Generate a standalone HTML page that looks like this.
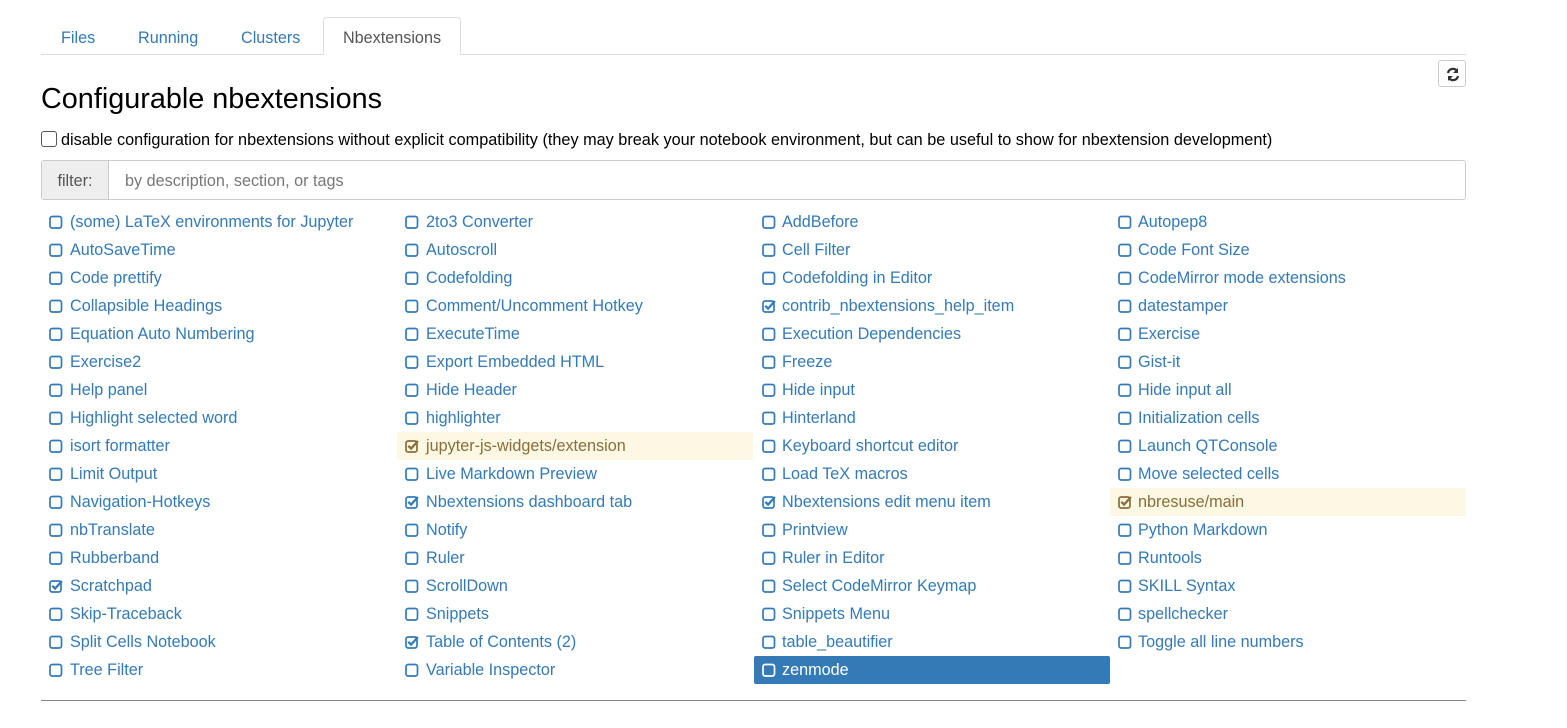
<!DOCTYPE html>
<html><head><meta charset="utf-8"><style>
*{box-sizing:border-box}
body{margin:0;background:#fff;font-family:"Liberation Sans",Arial,sans-serif;width:1567px;height:728px;overflow:hidden;position:relative;color:#000}
.tabs{position:absolute;left:41px;top:17px;width:1425px;height:38px;border-bottom:1px solid #ddd}
.tab{position:absolute;top:0;height:38px;line-height:42px;font-size:16.2px;color:#337ab7}
.tab.act{border:1px solid #ddd;border-bottom-color:#fff;border-radius:4px 4px 0 0;color:#555;background:#fff;height:38px;line-height:40px}
h1{position:absolute;left:41px;top:81px;margin:0;font-size:28.8px;font-weight:normal;line-height:36px}
.refresh{position:absolute;left:1438px;top:60px;width:28px;height:27px;border:1px solid #ccc;border-radius:3px;background:#fff}
.cb{position:absolute;left:41px;top:131px;width:16px;height:16px;border:1px solid #555;border-radius:3px}
.disable{position:absolute;left:61px;top:131px;font-size:16.25px;line-height:19px}
.filter{position:absolute;left:41px;top:160px;width:1425px;height:40px;border:1px solid #ccc;border-radius:3px}
.filter .add{position:absolute;left:0;top:0;width:67px;height:38px;background:#eee;border-right:1px solid #ccc;color:#555;font-size:16.2px;line-height:40px;text-align:center}
.filter .ph{position:absolute;left:83px;top:0;line-height:40px;font-size:16.2px;color:#777}
.col{position:absolute;top:208px;width:356px}
.it{height:28px;line-height:28px;font-size:16.2px;color:#337ab7;padding-left:8px;border-radius:2px;white-space:nowrap;position:relative}
.it svg{position:absolute;left:8px;top:7px}
.it span{position:absolute;left:28px;top:0}
.it.w{background:#fcf8e3;color:#8a6d3b}
.it.s{background:#337ab7;color:#fff}
.hr{position:absolute;left:41px;top:700px;width:1425px;height:1px;background:#888}
</style></head><body>
<div class="tabs">
<div class="tab" style="left:20px">Files</div>
<div class="tab" style="left:97px">Running</div>
<div class="tab" style="left:200px">Clusters</div>
<div class="tab act" style="left:282px;width:138px;text-align:center">Nbextensions</div>
</div>
<div class="refresh"><svg width="28" height="27" viewBox="0 0 28 27"><path d="M9 12a5 5 0 0 1 9-2" stroke="#333" stroke-width="2.2" fill="none"/><path d="M19 7v5h-5z" fill="#333"/><path d="M19 15a5 5 0 0 1-9 2" stroke="#333" stroke-width="2.2" fill="none"/><path d="M9 20v-5h5z" fill="#333"/></svg></div>
<h1>Configurable nbextensions</h1>
<div class="cb"></div>
<div class="disable">disable configuration for nbextensions without explicit compatibility (they may break your notebook environment, but can be useful to show for nbextension development)</div>
<div class="filter"><div class="add">filter:</div><div class="ph">by description, section, or tags</div></div>
<svg width="0" height="0" style="position:absolute"><defs>
<symbol id="u" viewBox="0 0 14 14"><rect x="1" y="1.5" width="11.5" height="11.5" rx="2.2" fill="none" stroke="currentColor" stroke-width="1.7"/></symbol>
<symbol id="c" viewBox="0 0 14 14"><rect x="1" y="2" width="11" height="11" rx="2.2" fill="none" stroke="currentColor" stroke-width="1.7"/><path d="M3.3 6.8l2.8 2.8 6.8-7.6" fill="none" stroke="currentColor" stroke-width="2.3"/></symbol>
</defs></svg>
<div class="col" style="left:41px">
<div class="it"><svg width="14" height="14"><use href="#u"/></svg><span style="left:29px">(some) LaTeX environments for Jupyter</span></div>
<div class="it"><svg width="14" height="14"><use href="#u"/></svg><span style="left:29px">AutoSaveTime</span></div>
<div class="it"><svg width="14" height="14"><use href="#u"/></svg><span style="left:29px">Code prettify</span></div>
<div class="it"><svg width="14" height="14"><use href="#u"/></svg><span style="left:29px">Collapsible Headings</span></div>
<div class="it"><svg width="14" height="14"><use href="#u"/></svg><span style="left:29px">Equation Auto Numbering</span></div>
<div class="it"><svg width="14" height="14"><use href="#u"/></svg><span style="left:29px">Exercise2</span></div>
<div class="it"><svg width="14" height="14"><use href="#u"/></svg><span style="left:29px">Help panel</span></div>
<div class="it"><svg width="14" height="14"><use href="#u"/></svg><span style="left:29px">Highlight selected word</span></div>
<div class="it"><svg width="14" height="14"><use href="#u"/></svg><span style="left:29px">isort formatter</span></div>
<div class="it"><svg width="14" height="14"><use href="#u"/></svg><span style="left:29px">Limit Output</span></div>
<div class="it"><svg width="14" height="14"><use href="#u"/></svg><span style="left:29px">Navigation-Hotkeys</span></div>
<div class="it"><svg width="14" height="14"><use href="#u"/></svg><span style="left:29px">nbTranslate</span></div>
<div class="it"><svg width="14" height="14"><use href="#u"/></svg><span style="left:29px">Rubberband</span></div>
<div class="it"><svg width="14" height="14"><use href="#c"/></svg><span style="left:29px">Scratchpad</span></div>
<div class="it"><svg width="14" height="14"><use href="#u"/></svg><span style="left:29px">Skip-Traceback</span></div>
<div class="it"><svg width="14" height="14"><use href="#u"/></svg><span style="left:29px">Split Cells Notebook</span></div>
<div class="it"><svg width="14" height="14"><use href="#u"/></svg><span style="left:29px">Tree Filter</span></div>
</div>
<div class="col" style="left:397px">
<div class="it"><svg width="14" height="14"><use href="#u"/></svg><span style="left:29px">2to3 Converter</span></div>
<div class="it"><svg width="14" height="14"><use href="#u"/></svg><span style="left:29px">Autoscroll</span></div>
<div class="it"><svg width="14" height="14"><use href="#u"/></svg><span style="left:29px">Codefolding</span></div>
<div class="it"><svg width="14" height="14"><use href="#u"/></svg><span style="left:29px">Comment/Uncomment Hotkey</span></div>
<div class="it"><svg width="14" height="14"><use href="#u"/></svg><span style="left:29px">ExecuteTime</span></div>
<div class="it"><svg width="14" height="14"><use href="#u"/></svg><span style="left:29px">Export Embedded HTML</span></div>
<div class="it"><svg width="14" height="14"><use href="#u"/></svg><span style="left:29px">Hide Header</span></div>
<div class="it"><svg width="14" height="14"><use href="#u"/></svg><span style="left:29px">highlighter</span></div>
<div class="it w"><svg width="14" height="14"><use href="#c"/></svg><span style="left:29px">jupyter-js-widgets/extension</span></div>
<div class="it"><svg width="14" height="14"><use href="#u"/></svg><span style="left:29px">Live Markdown Preview</span></div>
<div class="it"><svg width="14" height="14"><use href="#c"/></svg><span style="left:29px">Nbextensions dashboard tab</span></div>
<div class="it"><svg width="14" height="14"><use href="#u"/></svg><span style="left:29px">Notify</span></div>
<div class="it"><svg width="14" height="14"><use href="#u"/></svg><span style="left:29px">Ruler</span></div>
<div class="it"><svg width="14" height="14"><use href="#u"/></svg><span style="left:29px">ScrollDown</span></div>
<div class="it"><svg width="14" height="14"><use href="#u"/></svg><span style="left:29px">Snippets</span></div>
<div class="it"><svg width="14" height="14"><use href="#c"/></svg><span style="left:29px">Table of Contents (2)</span></div>
<div class="it"><svg width="14" height="14"><use href="#u"/></svg><span style="left:29px">Variable Inspector</span></div>
</div>
<div class="col" style="left:754px">
<div class="it"><svg width="14" height="14"><use href="#u"/></svg><span>AddBefore</span></div>
<div class="it"><svg width="14" height="14"><use href="#u"/></svg><span>Cell Filter</span></div>
<div class="it"><svg width="14" height="14"><use href="#u"/></svg><span>Codefolding in Editor</span></div>
<div class="it"><svg width="14" height="14"><use href="#c"/></svg><span>contrib_nbextensions_help_item</span></div>
<div class="it"><svg width="14" height="14"><use href="#u"/></svg><span>Execution Dependencies</span></div>
<div class="it"><svg width="14" height="14"><use href="#u"/></svg><span>Freeze</span></div>
<div class="it"><svg width="14" height="14"><use href="#u"/></svg><span>Hide input</span></div>
<div class="it"><svg width="14" height="14"><use href="#u"/></svg><span>Hinterland</span></div>
<div class="it"><svg width="14" height="14"><use href="#u"/></svg><span>Keyboard shortcut editor</span></div>
<div class="it"><svg width="14" height="14"><use href="#u"/></svg><span>Load TeX macros</span></div>
<div class="it"><svg width="14" height="14"><use href="#c"/></svg><span>Nbextensions edit menu item</span></div>
<div class="it"><svg width="14" height="14"><use href="#u"/></svg><span>Printview</span></div>
<div class="it"><svg width="14" height="14"><use href="#u"/></svg><span>Ruler in Editor</span></div>
<div class="it"><svg width="14" height="14"><use href="#u"/></svg><span>Select CodeMirror Keymap</span></div>
<div class="it"><svg width="14" height="14"><use href="#u"/></svg><span>Snippets Menu</span></div>
<div class="it"><svg width="14" height="14"><use href="#u"/></svg><span>table_beautifier</span></div>
<div class="it s"><svg width="14" height="14"><use href="#u"/></svg><span>zenmode</span></div>
</div>
<div class="col" style="left:1110px">
<div class="it"><svg width="14" height="14"><use href="#u"/></svg><span>Autopep8</span></div>
<div class="it"><svg width="14" height="14"><use href="#u"/></svg><span>Code Font Size</span></div>
<div class="it"><svg width="14" height="14"><use href="#u"/></svg><span>CodeMirror mode extensions</span></div>
<div class="it"><svg width="14" height="14"><use href="#u"/></svg><span>datestamper</span></div>
<div class="it"><svg width="14" height="14"><use href="#u"/></svg><span>Exercise</span></div>
<div class="it"><svg width="14" height="14"><use href="#u"/></svg><span>Gist-it</span></div>
<div class="it"><svg width="14" height="14"><use href="#u"/></svg><span>Hide input all</span></div>
<div class="it"><svg width="14" height="14"><use href="#u"/></svg><span>Initialization cells</span></div>
<div class="it"><svg width="14" height="14"><use href="#u"/></svg><span>Launch QTConsole</span></div>
<div class="it"><svg width="14" height="14"><use href="#u"/></svg><span>Move selected cells</span></div>
<div class="it w"><svg width="14" height="14"><use href="#c"/></svg><span>nbresuse/main</span></div>
<div class="it"><svg width="14" height="14"><use href="#u"/></svg><span>Python Markdown</span></div>
<div class="it"><svg width="14" height="14"><use href="#u"/></svg><span>Runtools</span></div>
<div class="it"><svg width="14" height="14"><use href="#u"/></svg><span>SKILL Syntax</span></div>
<div class="it"><svg width="14" height="14"><use href="#u"/></svg><span>spellchecker</span></div>
<div class="it"><svg width="14" height="14"><use href="#u"/></svg><span>Toggle all line numbers</span></div>
</div>
<div class="hr"></div>
</body></html>
